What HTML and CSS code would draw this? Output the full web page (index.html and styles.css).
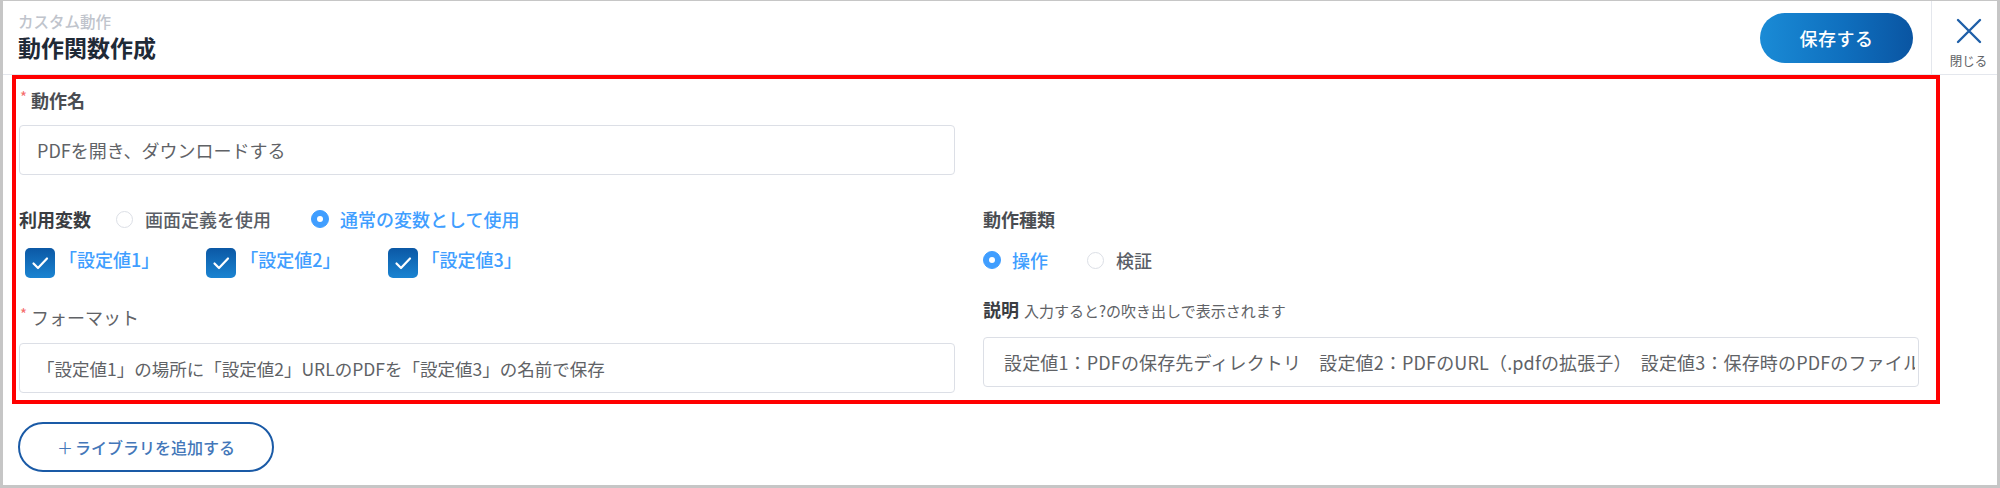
FILE: index.html
```html
<!DOCTYPE html>
<html lang="ja">
<head>
<meta charset="utf-8">
<title>動作関数作成</title>
<link rel="stylesheet" href="styles.css">
</head>
<body>
<div class="frame">
  <header class="header">
    <div class="titles">
      <div class="crumb">カスタム動作</div>
      <h1 class="title">動作関数作成</h1>
    </div>
    <button class="save-btn" type="button">保存する</button>
    <div class="close-col">
      <svg class="close-icon" width="26" height="26" viewBox="0 0 26 26" aria-hidden="true">
        <path d="M2 2 L24 24 M24 2 L2 24" stroke="#1f5fa8" stroke-width="2.4" fill="none" stroke-linecap="round"/>
      </svg>
      <span class="close-label">閉じる</span>
    </div>
  </header>

  <section class="form">
    <div class="col col-left">
      <label class="label label-name"><span class="req">*</span>動作名</label>
      <input class="field field-name" type="text" value="PDFを開き、ダウンロードする">

      <div class="vars-row">
        <span class="label-strong">利用変数</span>
        <span class="radio"><span class="dot"></span><span class="radio-text">画面定義を使用</span></span>
        <span class="radio is-checked"><span class="dot"></span><span class="radio-text">通常の変数として使用</span></span>
      </div>

      <div class="checks-row">
        <span class="check"><span class="box"><svg width="30" height="30" viewBox="0 0 30 30"><path d="M8.5 15.5 L13 20 L22 10.5" stroke="#fff" stroke-width="2.2" fill="none" stroke-linecap="round" stroke-linejoin="round"/></svg></span><span class="check-text">「設定値1」</span></span>
        <span class="check"><span class="box"><svg width="30" height="30" viewBox="0 0 30 30"><path d="M8.5 15.5 L13 20 L22 10.5" stroke="#fff" stroke-width="2.2" fill="none" stroke-linecap="round" stroke-linejoin="round"/></svg></span><span class="check-text">「設定値2」</span></span>
        <span class="check"><span class="box"><svg width="30" height="30" viewBox="0 0 30 30"><path d="M8.5 15.5 L13 20 L22 10.5" stroke="#fff" stroke-width="2.2" fill="none" stroke-linecap="round" stroke-linejoin="round"/></svg></span><span class="check-text">「設定値3」</span></span>
      </div>

      <label class="label label-format"><span class="req">*</span>フォーマット</label>
      <input class="field field-format" type="text" value="「設定値1」の場所に「設定値2」URLのPDFを「設定値3」の名前で保存">
    </div>

    <div class="col col-right">
      <span class="label-strong kind-label">動作種類</span>
      <div class="kind-row">
        <span class="radio is-checked"><span class="dot"></span><span class="radio-text">操作</span></span>
        <span class="radio"><span class="dot"></span><span class="radio-text">検証</span></span>
      </div>
      <div class="desc-label"><span class="label-strong">説明</span><span class="hint">入力すると?の吹き出しで表示されます</span></div>
      <input class="field field-desc" type="text" value="設定値1：PDFの保存先ディレクトリ　設定値2：PDFのURL（.pdfの拡張子）　設定値3：保存時のPDFのファイル名">
    </div>
  </section>

  <button class="add-btn" type="button"><span class="plus">＋</span>ライブラリを追加する</button>
</div>
</body>
</html>
```

FILE: styles.css
```css
* { box-sizing: border-box; }

html, body {
  margin: 0;
  padding: 0;
  background: #ffffff;
}

body {
  font-family: "Noto Sans CJK JP", "Noto Sans", sans-serif;
  color: #303133;
}

.frame {
  width: 2000px;
  height: 488px;
  border-style: solid;
  border-color: #c6c6c6;
  border-width: 1px 3px 3px 3px;
  background: #ffffff;
  overflow: hidden;
}

/* header */
.header {
  display: flex;
  align-items: center;
  height: 74px;
  border-bottom: 1px solid #e4e7ed;
  padding-left: 15px;
}

.titles {
  flex: 1;
  display: flex;
  flex-direction: column;
  align-self: flex-start;
  padding-top: 10px;
}

.crumb {
  font-size: 15.5px;
  line-height: 20px;
  color: #c0c4cc;
  font-weight: 500;
}

.title {
  margin: 1px 0 0 0;
  font-size: 23px;
  line-height: 31px;
  font-weight: 700;
  color: #1f2a37;
}

.save-btn {
  width: 153px;
  height: 50px;
  margin-right: 18px;
  border: none;
  border-radius: 25px;
  background: linear-gradient(90deg, #1a8bd6 0%, #0f6fbe 55%, #0a55a2 100%);
  color: #ffffff;
  font-family: inherit;
  font-size: 18px;
  font-weight: 500;
  letter-spacing: 0.5px;
  cursor: pointer;
}

.close-col {
  width: 66px;
  height: 73px;
  border-left: 1px solid #e4e7ed;
  padding-left: 8px;
  padding-top: 17px;
  display: flex;
  flex-direction: column;
  align-items: center;
}

.close-icon {
  display: block;
}

.close-label {
  margin-top: 9px;
  font-size: 12.5px;
  line-height: 16px;
  color: #606266;
}

/* form */
.form {
  margin-left: 9px;
  width: 1928px;
  border: 4px solid #ff0000;
  padding: 0 17px 7px 3px;
  display: grid;
  grid-template-columns: 1fr 1fr;
  column-gap: 28px;
}

.col {
  display: flex;
  flex-direction: column;
  align-items: flex-start;
}

.label {
  font-size: 18px;
  line-height: 24px;
  height: 24px;
  display: flex;
  align-items: flex-start;
}

.label-name {
  margin-top: 9px;
  font-weight: 700;
  color: #4a4d52;
}

.label-format {
  margin-top: 27px;
  font-weight: 400;
  color: #606266;
}

.req {
  color: #f56c6c;
  font-size: 15px;
  line-height: 18px;
  margin-left: 1px;
  margin-right: 4px;
  font-weight: 400;
}

.field {
  display: block;
  width: 100%;
  height: 50px;
  border: 1px solid #dcdfe6;
  border-radius: 4px;
  padding: 0 17px;
  font-family: inherit;
  font-size: 18px;
  color: #606266;
  background: #ffffff;
  outline: none;
}

.field-name { margin-top: 13px; }
.field-format { margin-top: 14px; font-size: 17.5px; }
.field-desc { margin-top: 16px; padding: 0 3px 0 20px; letter-spacing: 0.15px; }

.label-strong {
  font-size: 18px;
  line-height: 24px;
  font-weight: 700;
  color: #3a3d42;
}

.vars-row {
  margin-top: 32px;
  height: 24px;
  display: flex;
  align-items: center;
}

.vars-row .label-strong { margin-right: 25px; }

.radio {
  display: inline-flex;
  align-items: center;
  margin-right: 40px;
}

.dot {
  width: 17px;
  height: 17px;
  border-radius: 50%;
  border: 1px solid #dcdfe6;
  background: #ffffff;
  margin-right: 12px;
  position: relative;
  flex: none;
}

.radio.is-checked .dot {
  width: 18px;
  height: 18px;
  border-color: #409eff;
  background: #409eff;
  margin-right: 11px;
}

.radio.is-checked .dot::after {
  content: "";
  position: absolute;
  left: 50%;
  top: 50%;
  width: 6px;
  height: 6px;
  margin: -3px 0 0 -3px;
  border-radius: 50%;
  background: #ffffff;
}

.radio-text {
  font-size: 18px;
  line-height: 24px;
  font-weight: 500;
  color: #5a5e66;
}

.radio.is-checked .radio-text {
  color: #409eff;
}

.checks-row {
  margin-top: 17px;
  height: 30px;
  display: flex;
  align-items: center;
  padding-left: 6px;
}

.check {
  display: inline-flex;
  align-items: center;
  margin-right: 47px;
}

.box {
  width: 30px;
  height: 30px;
  border-radius: 5px;
  background: linear-gradient(180deg, #0b58a5 0%, #1a84d2 100%);
  display: flex;
  flex: none;
}

.box svg { display: block; }

.check-text {
  margin-left: 4px;
  font-size: 18px;
  line-height: 24px;
  font-weight: 500;
  color: #409eff;
  margin-top: -8px;
}

/* right column */
.col-right {
  padding-top: 128px;
}

.kind-label {
  height: 24px;
  color: #4a4d52;
}

.kind-row {
  margin-top: 17px;
  height: 24px;
  display: flex;
  align-items: center;
}

.kind-row .radio { margin-right: 39px; }

.desc-label {
  margin-top: 25px;
  height: 24px;
  display: flex;
  align-items: baseline;
}

.hint {
  margin-left: 5px;
  font-size: 15px;
  color: #606266;
}

/* bottom */
.add-btn {
  display: block;
  margin: 18px 0 0 15px;
  width: 256px;
  height: 50px;
  border: 2px solid #1a5aa6;
  border-radius: 25px;
  background: #ffffff;
  color: #4477b9;
  font-family: inherit;
  font-size: 16px;
  font-weight: 500;
  cursor: pointer;
}

.plus {
  font-weight: 400;
  margin-right: 2px;
}
```
